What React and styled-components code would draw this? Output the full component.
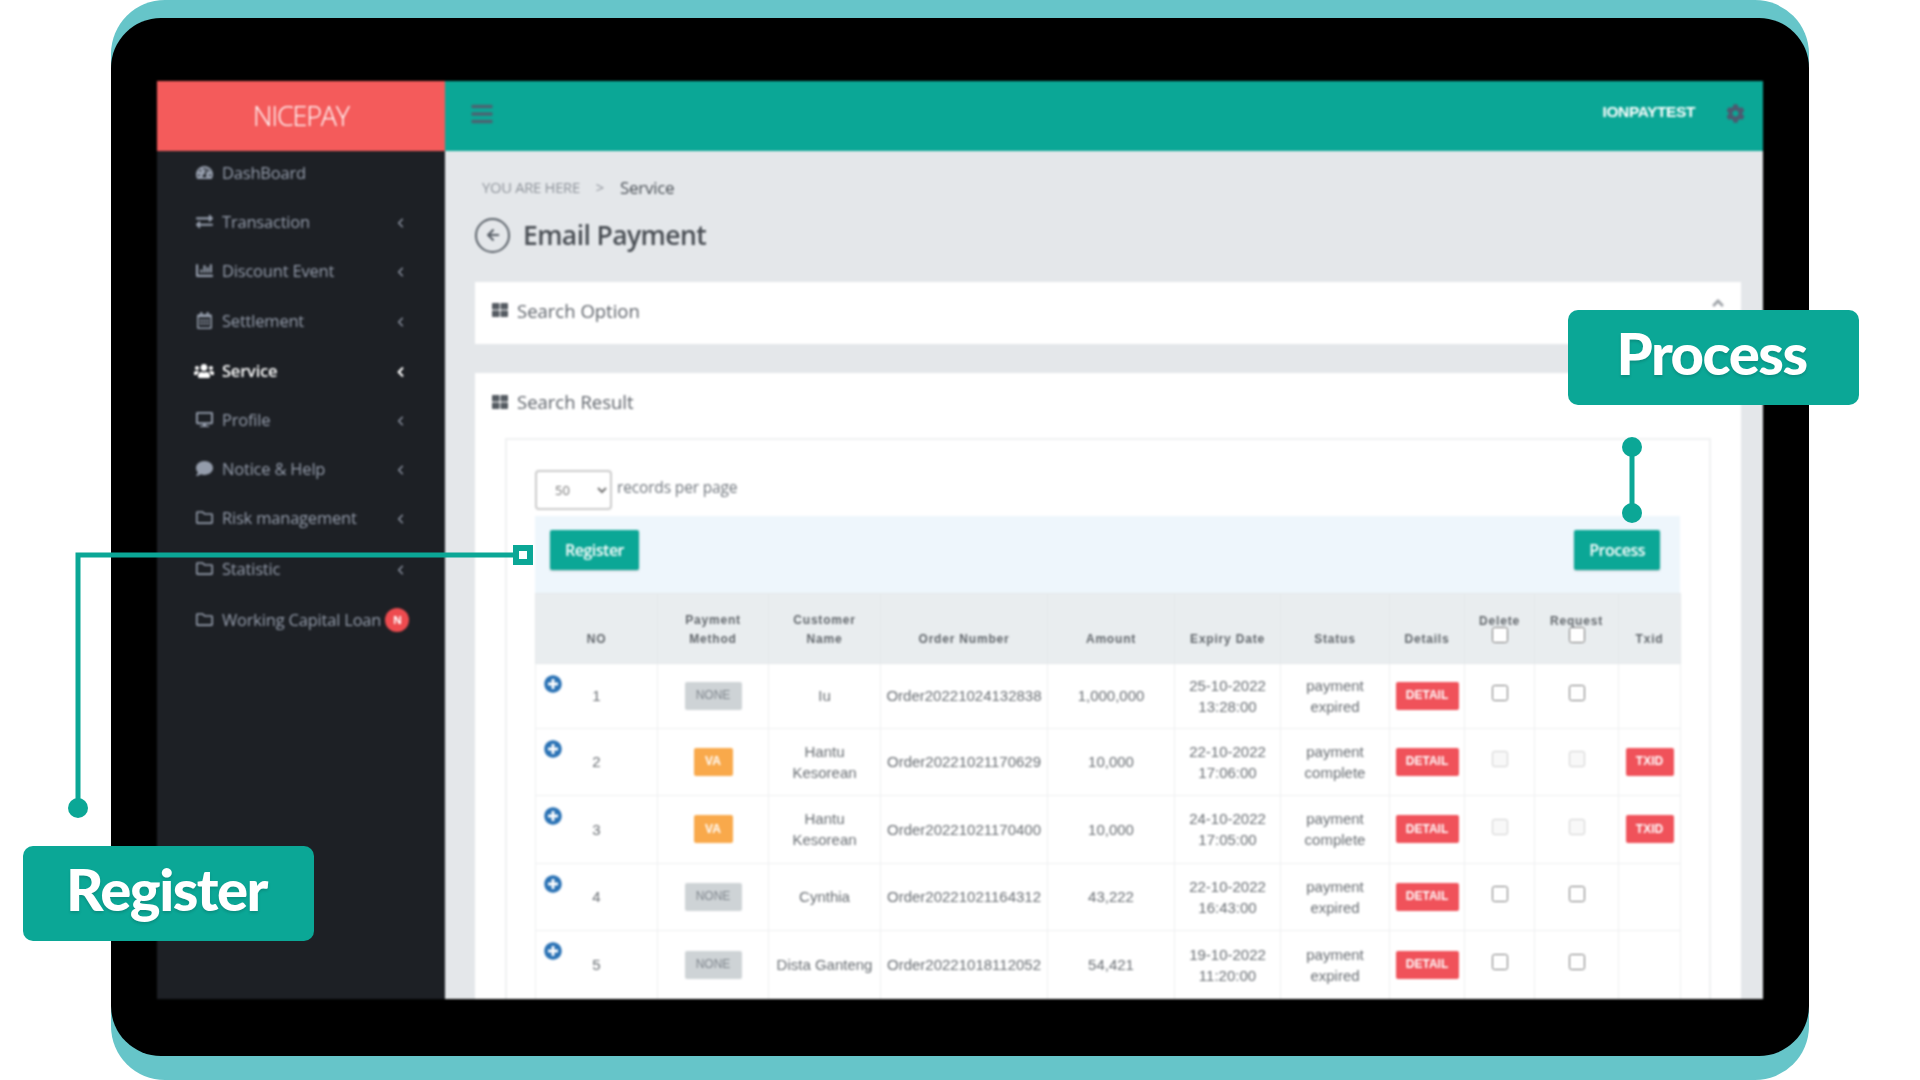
import React from "react";
import styled, { createGlobalStyle } from "styled-components";
import { ChevronLeft } from "lucide-react";
import {
  FaTachometerAlt,
  FaExchangeAlt,
  FaChartBar,
  FaRegCalendarAlt,
  FaUsers,
  FaDesktop,
  FaComment,
  FaRegFolder,
  FaThLarge,
  FaCog,
  FaBars,
  FaAngleUp,
  FaArrowLeft,
  FaPlusCircle,
} from "react-icons/fa";

const TEAL = "#0ba796";
const RED = "#f0525a";

//DATA
const menu = [
  { label: "DashBoard", icon: FaTachometerAlt, h: 49 },
  { label: "Transaction", icon: FaExchangeAlt, arrow: true, h: 49 },
  { label: "Discount Event", icon: FaChartBar, arrow: true, h: 49 },
  { label: "Settlement", icon: FaRegCalendarAlt, arrow: true, h: 51 },
  { label: "Service", icon: FaUsers, arrow: true, active: true, h: 49 },
  { label: "Profile", icon: FaDesktop, arrow: true, h: 49 },
  { label: "Notice & Help", icon: FaComment, arrow: true, h: 49 },
  { label: "Risk management", icon: FaRegFolder, arrow: true, h: 49 },
  { label: "Statistic", icon: FaRegFolder, arrow: true, h: 53 },
  { label: "Working Capital Loan", icon: FaRegFolder, badge: "N", h: 49 },
];

const columns = [122, 111, 112, 167, 127, 106, 109, 75, 70, 84, 62];

const rows = [
  { no: 1, method: "NONE", name: "Iu", order: "Order20221024132838", amount: "1,000,000", date: "25-10-2022", time: "13:28:00", status: "expired", h: 65 },
  { no: 2, method: "VA", name: "Hantu Kesorean", order: "Order20221021170629", amount: "10,000", date: "22-10-2022", time: "17:06:00", status: "complete", txid: true, h: 67 },
  { no: 3, method: "VA", name: "Hantu Kesorean", order: "Order20221021170400", amount: "10,000", date: "24-10-2022", time: "17:05:00", status: "complete", txid: true, h: 68 },
  { no: 4, method: "NONE", name: "Cynthia", order: "Order20221021164312", amount: "43,222", date: "22-10-2022", time: "16:43:00", status: "expired", h: 67 },
  { no: 5, method: "NONE", name: "Dista Ganteng", order: "Order20221018112052", amount: "54,421", date: "19-10-2022", time: "11:20:00", status: "expired", h: 69 },
];

const App = () => {
  return (
    <Page>
      <GlobalStyle />
      <TabletEdge>
        <TabletBody>
          <Screen>
            <Sidebar>
              <Logo>NICEPAY</Logo>
              <Nav>
                {menu.map((item) => (
                  <MenuItem key={item.label} $active={item.active} $h={item.h}>
                    <MenuIcon $active={item.active}>
                      <item.icon />
                    </MenuIcon>
                    <MenuLabel>{item.label}</MenuLabel>
                    {item.arrow && (
                      <MenuArrow>
                        <ChevronLeft size={15} strokeWidth={item.active ? 3.5 : 2} />
                      </MenuArrow>
                    )}
                    {item.badge && <MenuBadge>{item.badge}</MenuBadge>}
                  </MenuItem>
                ))}
              </Nav>
            </Sidebar>

            <Main>
              <TopBar>
                <Burger>
                  <FaBars />
                </Burger>
                <UserName>IONPAYTEST</UserName>
                <Gear>
                  <FaCog />
                </Gear>
              </TopBar>

              <Content>
                <Breadcrumb>
                  <span>YOU ARE HERE</span>
                  <Crumb>&gt;</Crumb>
                  <strong>Service</strong>
                </Breadcrumb>

                <TitleRow>
                  <BackButton>
                    <FaArrowLeft />
                  </BackButton>
                  <Title>Email Payment</Title>
                </TitleRow>

                <OptionPanel>
                  <FaThLarge />
                  <PanelTitle>Search Option</PanelTitle>
                  <Collapse>
                    <FaAngleUp />
                  </Collapse>
                </OptionPanel>

                <ResultPanel>
                  <ResultHead>
                    <FaThLarge />
                    <PanelTitle>Search Result</PanelTitle>
                  </ResultHead>

                  <ResultBox>
                    <PerPage>
                      <PageSelect defaultValue="50">
                        <option value="50">50</option>
                      </PageSelect>
                      <PerPageText>records per page</PerPageText>
                    </PerPage>

                    <Toolbar>
                      <ToolButton>Register</ToolButton>
                      <ToolButton>Process</ToolButton>
                    </Toolbar>

                    <Table>
                      <colgroup>
                        {columns.map((w, i) => (
                          <col key={i} style={{ width: w }} />
                        ))}
                      </colgroup>
                      <thead>
                        <tr>
                          <Th>NO</Th>
                          <Th>
                            Payment
                            <br />
                            Method
                          </Th>
                          <Th>
                            Customer
                            <br />
                            Name
                          </Th>
                          <Th>Order Number</Th>
                          <Th>Amount</Th>
                          <Th>Expiry Date</Th>
                          <Th>Status</Th>
                          <Th>Details</Th>
                          <Th>
                            Delete
                            <HeadCheck type="checkbox" />
                          </Th>
                          <Th>
                            Request
                            <HeadCheck type="checkbox" />
                          </Th>
                          <Th>Txid</Th>
                        </tr>
                      </thead>
                      <tbody>
                        {rows.map((row) => (
                          <tr key={row.no} style={{ height: row.h }}>
                            <NoCell>
                              <Expand>
                                <FaPlusCircle />
                              </Expand>
                              {row.no}
                            </NoCell>
                            <Td>
                              <Method $va={row.method === "VA"}>{row.method}</Method>
                            </Td>
                            <NameCell>{row.name}</NameCell>
                            <Td>{row.order}</Td>
                            <Td>{row.amount}</Td>
                            <Td>
                              {row.date}
                              <br />
                              {row.time}
                            </Td>
                            <Td>
                              payment
                              <br />
                              {row.status}
                            </Td>
                            <Td>
                              <RedButton $w={63}>DETAIL</RedButton>
                            </Td>
                            <Td>
                              <RowCheck type="checkbox" disabled={row.txid} />
                            </Td>
                            <Td>
                              <RowCheck type="checkbox" disabled={row.txid} />
                            </Td>
                            <Td>{row.txid && <RedButton $w={48}>TXID</RedButton>}</Td>
                          </tr>
                        ))}
                      </tbody>
                    </Table>
                  </ResultBox>
                </ResultPanel>
              </Content>
            </Main>
          </Screen>
        </TabletBody>
      </TabletEdge>

      {/* ANNOTATIONS */}
      <Connectors viewBox="0 0 1920 1080">
        <path d="M78 808V555H513" fill="none" stroke={TEAL} strokeWidth="5" />
        <circle cx="78" cy="808" r="10" fill={TEAL} />
        <rect x="516" y="548" width="14" height="14" fill="#fff" stroke={TEAL} strokeWidth="6" />
        <path d="M1632 447V513" stroke={TEAL} strokeWidth="5" />
        <circle cx="1632" cy="447" r="10" fill={TEAL} />
        <circle cx="1632" cy="513" r="10" fill={TEAL} />
      </Connectors>
      <Callout $left={23} $top={846}>Register</Callout>
      <Callout $left={1568} $top={310}>Process</Callout>
    </Page>
  );
};

const GlobalStyle = createGlobalStyle`
  html, body {
    margin: 0;
    background: #fff;
    overflow: hidden;
  }
  * {
    box-sizing: border-box;
  }
`;

const Page = styled.div`
  position: relative;
  width: 1920px;
  height: 1080px;
  padding-left: 111px;
  font-family: "Open Sans", sans-serif;
`;

const TabletEdge = styled.div`
  width: 1698px;
  height: 1080px;
  padding: 18px 0 24px;
  background: #66c5c9;
  border-radius: 54px;
`;

const TabletBody = styled.div`
  height: 100%;
  padding: 63px 46px 57px;
  background: #000;
  border-radius: 50px;
`;

const Screen = styled.div`
  display: flex;
  height: 100%;
  overflow: hidden;
  background: #e4e7ea;
  filter: blur(0.8px);
`;

const Sidebar = styled.aside`
  position: relative;
  flex: 0 0 288px;
  background: #1d2025;
`;

const Logo = styled.div`
  display: flex;
  align-items: center;
  justify-content: center;
  height: 70px;
  padding-bottom: 2px;
  background: #f45b5b;
  color: #fff;
  font-size: 27px;
  font-weight: 300;
  letter-spacing: -1.2px;
`;

const Nav = styled.nav`
  margin-top: -3px;
`;

const MenuItem = styled.div`
  position: relative;
  display: flex;
  align-items: center;
  height: ${(props) => props.$h}px;
  padding-left: 37px;
  color: ${(props) => (props.$active ? "#fff" : "#949cab")};
  font-size: 16.5px;
  font-weight: ${(props) => (props.$active ? 600 : 400)};
  letter-spacing: -0.2px;
`;

const MenuIcon = styled.span`
  display: flex;
  justify-content: center;
  width: 20px;
  margin-right: 8px;
  font-size: ${(props) => (props.$active ? 20 : 17)}px;
`;

const MenuLabel = styled.span`
  white-space: nowrap;
`;

const MenuArrow = styled.span`
  position: absolute;
  left: 236px;
  top: 50%;
  display: flex;
  transform: translateY(-50%);
  margin-top: 1px;
`;

const MenuBadge = styled.span`
  display: flex;
  align-items: center;
  justify-content: center;
  width: 24px;
  height: 24px;
  margin-left: 4px;
  border-radius: 50%;
  background: #ee4b4f;
  color: #fff;
  font-size: 11px;
  font-weight: 700;
`;

const Main = styled.main`
  flex: 1;
  min-width: 0;
`;

const TopBar = styled.header`
  display: flex;
  align-items: center;
  height: 70px;
  padding: 0 18px 5px 25px;
  background: ${TEAL};
`;

const Burger = styled.span`
  display: flex;
  color: #4b6472;
  font-size: 24px;
`;

const UserName = styled.span`
  margin-left: auto;
  margin-bottom: 3px;
  color: #fff;
  font-family: "Liberation Sans", sans-serif;
  font-size: 15.5px;
  font-weight: 700;
  letter-spacing: -0.4px;
`;

const Gear = styled.span`
  display: flex;
  margin-left: 31px;
  color: #4d5a70;
  font-size: 19px;
`;

const Content = styled.div`
  padding: 25px 22px 0 30px;
`;

const Breadcrumb = styled.div`
  display: flex;
  align-items: center;
  height: 22px;
  padding-left: 7px;
  color: #8f949b;
  font-size: 14.8px;
  letter-spacing: -0.3px;
  strong {
    color: #4c5258;
    font-size: 17px;
    font-weight: 400;
  }
`;

const Crumb = styled.span`
  margin: 0 16px;
`;

const TitleRow = styled.div`
  display: flex;
  align-items: center;
  height: 44px;
  margin: 15px 0 25px;
`;

const BackButton = styled.span`
  display: flex;
  align-items: center;
  justify-content: center;
  width: 35px;
  height: 35px;
  margin-right: 13px;
  border: 2px solid #596068;
  border-radius: 50%;
  color: #596068;
  font-size: 14px;
`;

const Title = styled.h1`
  margin: 0;
  color: #4a4f55;
  font-size: 26.5px;
  font-weight: 600;
  letter-spacing: -0.6px;
`;

const OptionPanel = styled.section`
  position: relative;
  display: flex;
  align-items: center;
  height: 62px;
  margin-bottom: 29px;
  padding: 0 0 6px 17px;
  background: #fff;
  color: #555b62;
  font-size: 16px;
`;

const PanelTitle = styled.span`
  margin-left: 9px;
  color: #5f646b;
  font-size: 18.5px;
`;

const Collapse = styled.span`
  position: absolute;
  right: 14px;
  top: 12px;
  display: flex;
  color: #a0a4a9;
  font-size: 18px;
`;

const ResultPanel = styled.section`
  padding: 0 30px 40px;
  background: #fff;
`;

const ResultHead = styled.div`
  display: flex;
  align-items: center;
  height: 60px;
  margin-left: -13px;
  padding-bottom: 3px;
  color: #555b62;
  font-size: 16px;
`;

const ResultBox = styled.div`
  margin-top: 5px;
  padding: 30px 29px 0 28px;
  border: 2px solid #f0f1f2;
`;

const PerPage = styled.div`
  display: flex;
  align-items: flex-start;
  margin-bottom: 6px;
`;

const PageSelect = styled.select`
  width: 77px;
  height: 40px;
  padding-left: 14px;
  border: 2px solid #ccc;
  border-radius: 4px;
  background: #fff;
  color: #777;
  font-family: "Open Sans", sans-serif;
  font-size: 13px;
`;

const PerPageText = styled.span`
  margin: 6px 0 0 5px;
  color: #71777e;
  font-size: 15.5px;
  letter-spacing: -0.15px;
`;

const Toolbar = styled.div`
  display: flex;
  align-items: flex-start;
  justify-content: space-between;
  height: 77px;
  padding: 14px 20px 0 15px;
  background: #eef6fc;
`;

const ToolButton = styled.button`
  height: 40px;
  padding: 0 15px;
  border: 0;
  border-radius: 2px;
  background: ${TEAL};
  color: #fff;
  font-family: "Open Sans", sans-serif;
  font-size: 16px;
  font-weight: 600;
  letter-spacing: -0.5px;
  box-shadow: 0 1px 2px rgba(0, 0, 0, 0.2);
`;

const Table = styled.table`
  width: 1145px;
  table-layout: fixed;
  border-collapse: collapse;
  font-family: "Liberation Sans", sans-serif;
`;

const Th = styled.th`
  height: 70px;
  padding: 0 0 14px;
  border: 1px solid #e4e8ea;
  background: #e9edef;
  color: #62676c;
  font-size: 12px;
  font-weight: 700;
  line-height: 19px;
  letter-spacing: 0.8px;
  text-align: center;
  vertical-align: bottom;
`;

const HeadCheck = styled.input`
  display: block;
  width: 16px;
  height: 16px;
  margin: -4px auto 6px;
`;

const Td = styled.td`
  padding: 0 0 1px;
  border: 1px solid #eef0f1;
  color: #696e73;
  font-size: 15px;
  line-height: 21px;
  text-align: center;
  vertical-align: middle;
`;

const NameCell = styled(Td)`
  padding: 0 6px 1px;
`;

const NoCell = styled(Td)`
  position: relative;
`;

const Expand = styled.span`
  position: absolute;
  left: 8px;
  top: 11px;
  display: flex;
  color: #2a72b5;
  font-size: 18px;
`;

const Method = styled.span`
  display: inline-flex;
  align-items: center;
  justify-content: center;
  width: ${(props) => (props.$va ? 39 : 57)}px;
  height: 28px;
  border-radius: 2px;
  background: ${(props) => (props.$va ? "#f9a94b" : "#ced3d6")};
  color: ${(props) => (props.$va ? "#fff" : "#80878e")};
  font-size: 12px;
  font-weight: ${(props) => (props.$va ? 700 : 400)};
`;

const RedButton = styled.span`
  display: inline-flex;
  align-items: center;
  justify-content: center;
  width: ${(props) => props.$w}px;
  height: 28px;
  border-radius: 2px;
  background: ${RED};
  color: #fff;
  font-size: 12px;
  font-weight: 700;
  vertical-align: middle;
`;

const RowCheck = styled.input`
  width: 16px;
  height: 16px;
  margin: 0 0 6px;
  vertical-align: middle;
`;

const Connectors = styled.svg`
  position: absolute;
  inset: 0;
  width: 1920px;
  height: 1080px;
  pointer-events: none;
`;

const Callout = styled.div`
  position: absolute;
  left: ${(props) => props.$left}px;
  top: ${(props) => props.$top}px;
  display: flex;
  align-items: center;
  justify-content: center;
  width: 291px;
  height: 95px;
  padding: 0 4px 10px 0;
  border-radius: 10px;
  background: ${TEAL};
  color: #fff;
  font-family: Lato, sans-serif;
  font-size: 58px;
  font-weight: 900;
  letter-spacing: -1.5px;
  text-shadow: 0 2px 3px rgba(0, 0, 0, 0.15);
`;

export default App;
